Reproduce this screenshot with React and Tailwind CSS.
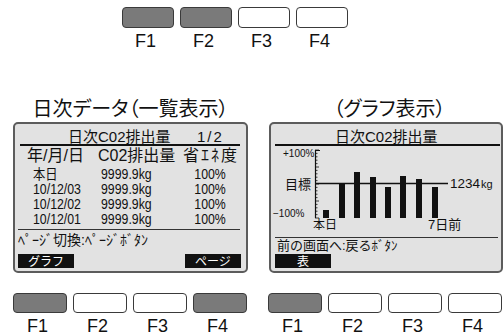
import React from 'react';

// ─── screen text: latin + gothic kana ────────────────────────────────────────
const LCD = "font-['Liberation_Sans','Noto_Sans_CJK_JP',sans-serif]";
const KEYS = ['F1', 'F2', 'F3', 'F4'];

const ROWS = [
    { d: '本日', h: 'h-[16px]' },
    { d: '10/12/03', h: 'h-[15px]' },
    { d: '10/12/02', h: 'h-[15px]' },
    { d: '10/12/01', h: 'h-[15px]' },
];

// bars: x offset in the chart, top y (bottom is 72)
const BARS = [
    [52, 64], [68, 37], [83, 26], [99, 31], [114, 41], [129, 30], [145, 33], [161, 41],
];

const FKeyRow = ({ dark, rowClass, keyClass, labelClass }) => (
    <div className={`flex gap-[6px] ${rowClass}`}>
        {KEYS.map((k, i) => (
            <div key={k} className={`flex flex-col items-center ${keyClass}`}>
                <div
                    className={`w-full rounded-[4px] border-[1.5px] border-[#3a3a3a] ${
                        dark.includes(i) ? 'bg-[#7a7a7a]' : 'bg-white'
                    } ${labelClass}`}
                />
                <span className="mt-[4px] pr-[5px] font-['Liberation_Sans',sans-serif] text-[18px] leading-[18px] text-[#111]">
                    {k}
                </span>
            </div>
        ))}
    </div>
);

const Title = ({ children, className = '' }) => (
    <div
        className={`h-[24px] text-center font-['Noto_Sans_CJK_JP',sans-serif] text-[20px] leading-[24px] text-[#111] [font-feature-settings:'palt'] ${className}`}
    >
        {children}
    </div>
);

const BlackKey = ({ children, className = '' }) => (
    <div
        className={`h-[14px] w-[56px] bg-[#111] text-center font-['Noto_Sans_CJK_JP',sans-serif] text-[12px] leading-[14px] text-white ${className}`}
    >
        {children}
    </div>
);

const Chart = () => {
    const ticks = Array.from({ length: 21 }, (_, i) => 4 + i * 3.4);
    return (
        <svg width="230" height="86" className="block" fill="#111">
            <text x="12" y="11" fontSize="10" fontFamily="Liberation Sans, sans-serif">+100%</text>
            <line x1="44.5" y1="4" x2="44.5" y2="72" stroke="#111" strokeWidth="1.2" />
            <line x1="44" y1="4.5" x2="49" y2="4.5" stroke="#111" strokeWidth="1" />
            {ticks.map((y, i) => (
                <line key={i} x1="44" y1={y} x2={i % 5 === 0 ? 48 : 46.5} y2={y} stroke="#111" strokeWidth="0.8" />
            ))}
            <line x1="44" y1="37.5" x2="177" y2="37.5" stroke="#111" strokeWidth="1.3" />
            {BARS.map(([x, top]) => (
                <rect key={x} x={x} y={top} width="6" height={72 - top} />
            ))}
            <text x="14" y="42.5" fontSize="13" fontFamily="Noto Sans CJK JP, sans-serif">目標</text>
            <text x="179" y="41.5" fontSize="13.5" fontFamily="Liberation Sans, sans-serif">1234</text>
            <text x="210" y="41.5" fontSize="11" fontFamily="Liberation Sans, sans-serif">kg</text>
            <text x="2" y="71" fontSize="10" fontFamily="Liberation Sans, sans-serif">−100%</text>
            <text x="42" y="82.5" fontSize="12" fontFamily="Noto Sans CJK JP, sans-serif">本日</text>
            <text x="157" y="83" fontSize="13" fontFamily="Liberation Sans, Noto Sans CJK JP, sans-serif">7日前</text>
        </svg>
    );
};

const ListPanel = () => (
    <div className={`h-[151px] rounded-[5px] border-2 border-[#5c5c5c] bg-[#e2e2e2] text-[#111] ${LCD}`}>
        <div className="flex h-[20px] items-end pl-[53px] text-[15px] leading-[15px]">
            <span className="w-[129px]">日次C02排出量</span>
            <span className="tracking-[2px]">1/2</span>
        </div>
        <div className="ml-[5px] mr-[6px] h-[2px] bg-[#111]" />
        <div className="flex h-[20px] items-center pl-[12px] text-[16px] leading-[20px]">
            <span className="w-[71px]">年/月/日</span>
            <span className="w-[85px]">C02排出量</span>
            <span className="tracking-[2px]">省ｴﾈ度</span>
        </div>
        {ROWS.map((r) => (
            <div key={r.d} className={`flex items-center pl-[18px] text-[14px] leading-[15px] ${r.h}`}>
                <span className="w-[68px]">
                    <span className="inline-block origin-left scale-x-[0.88]">{r.d}</span>
                </span>
                <span className="w-[89px]">
                    <span className="inline-block origin-left scale-x-[0.88]">9999.9kg</span>
                </span>
                <span className="w-[32px] text-right">
                    <span className="inline-block origin-right scale-x-[0.88]">100%</span>
                </span>
            </div>
        ))}
        <div className="ml-[3px] mr-[6px] mt-[2px] h-px bg-[#333]" />
        <div className="h-[20px] pl-[3px] text-[14px] leading-[20px]">ﾍﾟｰｼﾞ切換:ﾍﾟｰｼﾞﾎﾞﾀﾝ</div>
        <div className="mt-[4px] flex justify-between pl-[3px] pr-[5px]">
            <BlackKey>グラフ</BlackKey>
            <BlackKey>ページ</BlackKey>
        </div>
    </div>
);

const GraphPanel = () => (
    <div className={`h-[151px] rounded-[5px] border-2 border-[#5c5c5c] bg-[#e2e2e2] text-[#111] ${LCD}`}>
        <div className="flex h-[20px] items-end pl-[64px] text-[15px] leading-[15px]">
            <span>日次C02排出量</span>
        </div>
        <div className="ml-[4px] mr-[1px] h-[2px] bg-[#111]" />
        <Chart />
        <div className="ml-[4px] mr-[3px] mt-[5px] h-px bg-[#333]" />
        <div className="h-[15px] pl-[6px] text-[13px] leading-[15px]">前の画面へ:戻るﾎﾞﾀﾝ</div>
        <BlackKey className="ml-[4px] mt-[1px]">表</BlackKey>
    </div>
);

export default function App() {
    return (
        <div className="h-[335px] w-[503px] overflow-hidden bg-white">
            <FKeyRow dark={[0, 1]} rowClass="pl-[122px] pt-[7px]" keyClass="w-[52px]" labelClass="h-[21px]" />

            <div className="mt-[46px] flex gap-[21px] pl-[13px]">
                <div className="w-[235px]">
                    <Title>日次データ（一覧表示）</Title>
                    <div className="mt-[2px]">
                        <ListPanel />
                    </div>
                    <FKeyRow dark={[0, 3]} rowClass="mt-[20px]" keyClass="w-[54px]" labelClass="h-[20px]" />
                </div>
                <div className="w-[234px]">
                    <Title className="pl-[7px]">（グラフ表示）</Title>
                    <div className="mt-[2px]">
                        <GraphPanel />
                    </div>
                    <FKeyRow dark={[0]} rowClass="-ml-[1px] mt-[20px]" keyClass="w-[54px]" labelClass="h-[20px]" />
                </div>
            </div>
        </div>
    );
}
